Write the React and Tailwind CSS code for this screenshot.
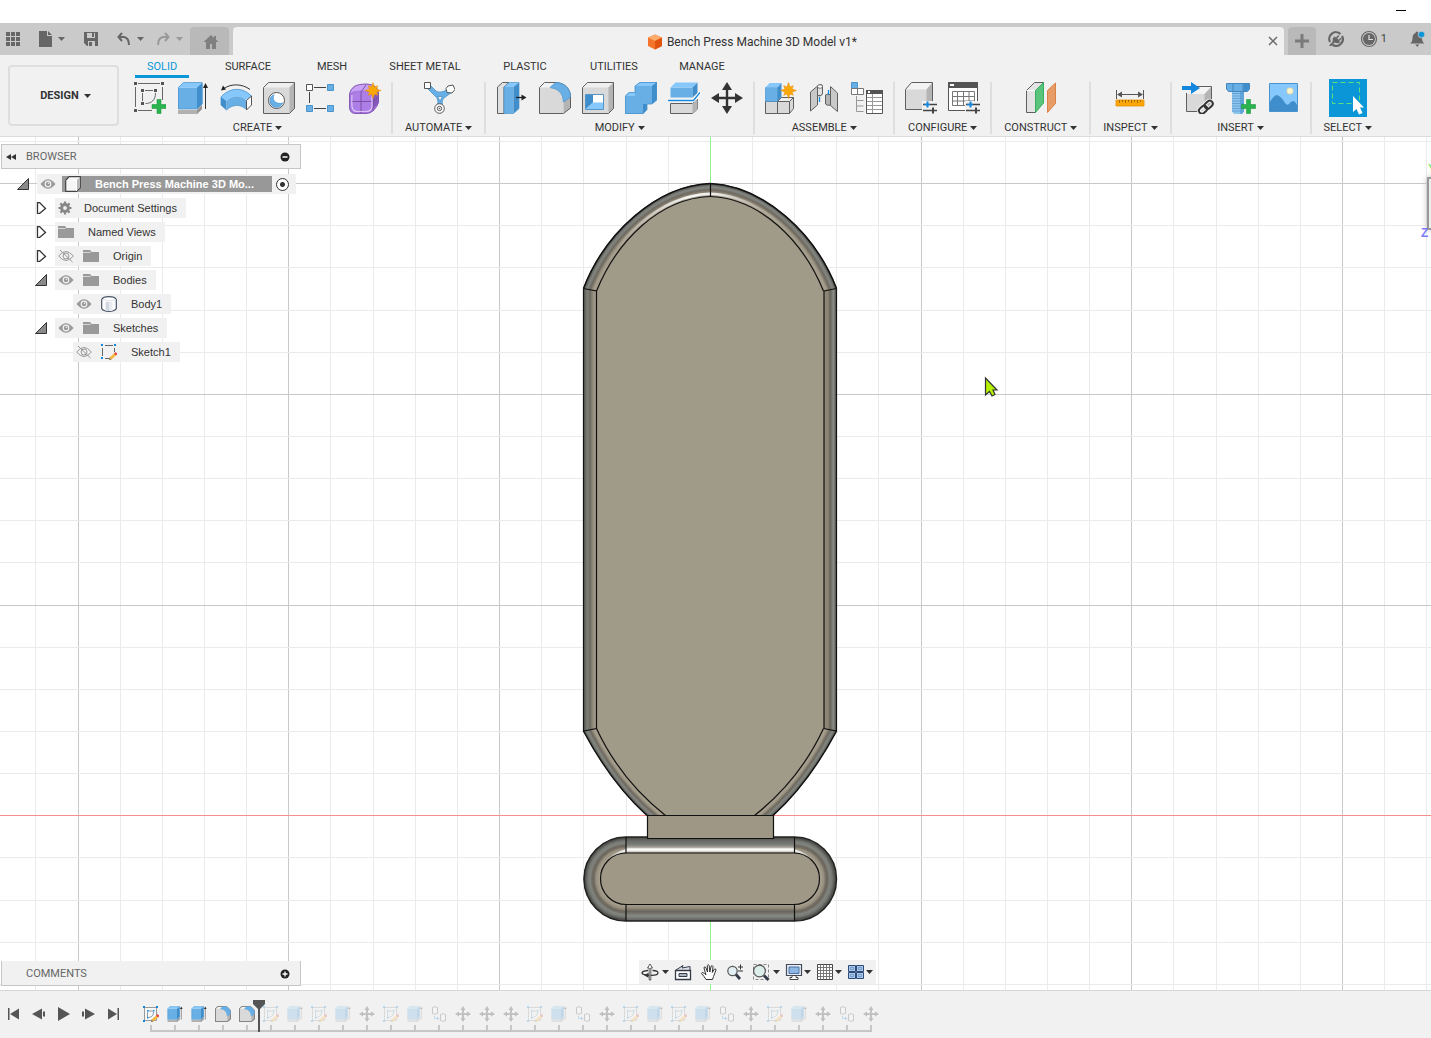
import React from "react";

const BLUE = "#68afe6";
const LIGHT = "#86c8fb";
const DEEP = "#3f8ecb";
const LINE = "#5f5f5f";

function Icon({ size = 32, box, className = "", children }) {
  return (
    <svg
      width={size}
      height={size}
      viewBox={box || `0 0 ${size} ${size}`}
      fill="none"
      aria-hidden="true"
      className={`block shrink-0 ${className}`}
    >
      {children}
    </svg>
  );
}

const Caret = ({ className = "text-[#333]" }) => (
  <svg width="7" height="4" viewBox="0 0 7 4" aria-hidden="true" className={`shrink-0 ${className}`}>
    <path d="M0 0h7L3.500 4z" fill="currentColor" />
  </svg>
);

const Star = ({ x, y, r = 8 }) => {
  const pts = [];
  for (let i = 0; i < 16; i++) {
    const a = (i * Math.PI) / 8 - Math.PI / 2;
    const q = i % 2 ? r * 0.48 : i % 4 ? r * 0.85 : r;
    pts.push(`${(x + q * Math.cos(a)).toFixed(2)},${(y + q * Math.sin(a)).toFixed(2)}`);
  }
  return <polygon points={pts.join(" ")} fill="#fca708" stroke="#e58c00" strokeWidth=".5" />;
};

const Plus = ({ x, y }) => (
  <path
    d={`M${x + 5} ${y}h4v5h5v4h-5v5h-4v-5h-5v-4h5z`}
    fill="#2bb34f"
    stroke="#1d9a40"
    strokeWidth=".6"
  />
);

/* ---------- ribbon icons ---------- */

const SketchIcon = () => (
  <Icon>
    <g fill="#555">
      <path d="M0 0h3v3H0zM27 0h3v3h-3zM0 27h3v3H0zM7 7h3v3H7zM20 7h3v3h-3zM7 20h3v3H7z" />
    </g>
    <g stroke="#666">
      <path d="M4 1.500h22M1.500 5v20M28.500 5v13M4 28.500h14M11 8.500h8M8.500 11v8" />
      <path d="M21.500 11c0 7-4 10.500-10 10.500" />
    </g>
    <Plus x={18} y={17.500} />
  </Icon>
);

const ExtrudeShape = () => (
  <>
    <path d="M1 28h19l5-5v4l-5 5H1z" fill="#b3b0b0" />
    <path d="M20 28l5-5v4l-5 5z" fill="#989494" />
    <path d="M1 5.500h19V27H1z" fill={BLUE} />
    <path d="M1 5.500L6 .5h19.500l-5.500 5z" fill={LIGHT} />
    <path d="M20 5.500l5.500-5V22L20 27z" fill={DEEP} />
    <path d="M1.500 27V5.500l5-5H25V22l-5 5z" stroke="#4b93cb" strokeWidth=".7" />
    <path d="M28.500 27V4" stroke="#333" />
    <path d="M28.500 1l2.500 5h-5z" fill="#222" />
  </>
);
const ExtrudeIcon = () => (
  <Icon>
    <ExtrudeShape />
  </Icon>
);

const RevolveIcon = () => (
  <Icon>
    <path d="M4 6.500C11 1.500 22 1.500 30 7.500" stroke="#333" />
    <path d="M1 8.500l2-5 3 4z" fill="#222" />
    <path d="M1 15C10 5 23 5 32 14l-6 4C20 13 13 13 6.500 19z" fill={LIGHT} />
    <path d="M1 15l5.500 4v9L1 23z" fill={DEEP} />
    <path d="M6.500 19C13 13 20 13 26 18v9c-6-5-13-5-19.500 1z" fill={BLUE} />
    <path d="M1 15C10 5 23 5 31 14M1 15v8l5.500 5c6.500-6 13.500-6 19.500-1" stroke="#4a93cc" strokeWidth=".8" />
    <path d="M26.500 18.500l5-4.500v9l-5 5z" fill="#fff" stroke="#555" />
  </Icon>
);

const GrayBox = () => (
  <>
    <path d="M.5 5.500l5-5h26v26l-5 5H.5z" fill="#d9d9d9" />
    <path d="M.5 5.500l5-5h26l-5 5z" fill="#efefef" />
    <path d="M26.500 5.500l5-5v26l-5 5z" fill="#b4b4b4" />
    <path d="M.5 5.500l5-5h26v26l-5 5H.5z" stroke={LINE} />
  </>
);

const HoleIcon = () => (
  <Icon>
    <GrayBox />
    <circle cx="13.500" cy="18.500" r="8" fill="#fff" stroke="#555" />
    <path d="M9.500 13.500a6.500 6.500 0 1 0 10 7.500C14.500 23 9 19 9.500 13.500z" fill={BLUE} stroke="#3b8ac8" strokeWidth=".8" />
    <path d="M11.500 12Q9 19 14 21.500 17.500 22.500 20 20.500 17 27 11.500 24.500 6 21 7.500 16 8.500 13 11.500 12z" fill={BLUE} />
  </Icon>
);

const PatternIcon = () => (
  <Icon>
    <path d="M8 5.500h12M8 26.500h12M3.500 10v11" stroke="#444" />
    <path d="M.5 2.500h6v6h-6z" fill="#fff" stroke="#555" />
    <path d="M21.500 2.500h6v6h-6zM.5 23.500h6v6h-6zM21.500 23.500h6v6h-6z" fill={BLUE} stroke="#4b93cb" />
  </Icon>
);

const FormIcon = () => (
  <Icon>
    <path d="M.5 12Q1 8 5 4.500Q9 2 18 2Q29 3 29.500 11V20Q29 24 24 29Q21 31.500 17 31.500H6Q.5 31 .5 25z" fill="#a877e0" />
    <path d="M1 12Q3 5 9 3Q20 1 26 4L22 9Q12 8 6 9Q2 10 1 12z" fill="#c9a1f5" />
    <path d="M24 14l5.500-4v11l-5.500 6z" fill="#8657bd" />
    <path d="M4 13Q5 10 9 10H19Q23 10 23 15V25Q22 29.500 17 29.500H8Q3 29 3 25z" fill="#ad7fe6" />
    <path d="M1.500 19.500h22l6-4M12 10v21M12 10l5-7M24 13q1.500 8-.5 15" stroke="#77499f" strokeWidth=".9" />
    <path d="M3 13q-.5 6 0 12 1 4.500 5 4.500h9q5 0 6-4.500V14" stroke="#dcc4f8" strokeWidth="1.200" />
    <path d="M.5 12Q1 8 5 4.500Q9 2 18 2Q29 3 29.500 11V20Q29 24 24 29Q21 31.500 17 31.500H6Q.5 31 .5 25z" stroke="#7d51ad" strokeWidth=".9" />
    <Star x={24} y={8.500} />
  </Icon>
);

const AutomateIcon = () => (
  <Icon>
    <path d="M5 7l9 9q2 3 0 9h6q-2-6 1-9l8-6-3-3q-10 5-13 2L8 4z" fill={BLUE} stroke="#4a93cc" strokeWidth=".8" />
    <path d="M14.500 14.500h5L17 19z" fill="#f1f1f1" stroke="#4a93cc" strokeWidth=".8" />
    <path d="M1.500.5h6v6h-6z" fill="#fff" stroke="#555" />
    <path d="M25 4l5-1 2 4.500-3 3.500-5-.5-1-4z" fill="#fff" stroke="#555" />
    <circle cx="16.500" cy="26.500" r="4.800" fill="#fff" stroke="#555" />
    <circle cx="16.500" cy="26.500" r="2.200" stroke="#555" />
    <circle cx="16.500" cy="26.500" r=".8" fill="#555" />
  </Icon>
);

const PressPullIcon = () => (
  <Icon>
    <path d="M1.500 5l5-4.500H13L8 5v26.500H1.500z" fill="#e0e0e0" stroke={LINE} />
    <path d="M8 5h9.500v26.500H8z" fill={BLUE} />
    <path d="M8 5l5-4.500h10L17.500 5z" fill={LIGHT} />
    <path d="M17.500 5L23 .5v26l-5.500 5z" fill={DEEP} />
    <path d="M8 31.500V5l5-4.500h10v26l-5.500 5z" stroke="#4a93cc" strokeWidth=".7" />
    <path d="M20 15.500h7" stroke="#222" strokeWidth="1.300" />
    <path d="M25.500 12.500l5 3-5 3z" fill="#222" />
  </Icon>
);

const FilletShape = () => (
  <>
    <path d="M.5 5.500l5-5H17C26 1 31.500 7 31.500 15v11l-7 5.500H.5z" fill="#f2f2f2" />
    <path d="M.5 5.500H11q13 2 13.500 14v12H.5z" fill="#d9d9d9" />
    <path d="M24.500 19.500l7-5V26l-7 5.500z" fill="#b4b4b4" />
    <path d="M.5 5.500l5-5H17C26 1 31.500 7 31.500 15v11l-7 5.500H.5z" stroke={LINE} />
    <path d="M11 5.500l5.500-5C26 .5 31.500 7 31.500 15l-7 5Q24 7 11 5.500z" fill={BLUE} stroke="#4a93cc" strokeWidth=".8" />
  </>
);
const FilletIcon = () => (
  <Icon>
    <FilletShape />
  </Icon>
);

const ShellIcon = () => (
  <Icon>
    <GrayBox />
    <path d="M3.500 12.500h18v15h-18z" fill="#fff" stroke="#5595c7" />
    <path d="M4 13h7v7.500L4 27z" fill={DEEP} />
    <path d="M11 20.500h10V27H4z" fill={LIGHT} />
  </Icon>
);

const CombineIcon = () => (
  <Icon>
    <path d="M0 14l4-4h6V4l5-4h17v18l-5 4h-5v5.500L18 32H0z" fill={BLUE} />
    <path d="M10 4l5-4h17l-5 4zM0 14l4-4h6v4z" fill={LIGHT} />
    <path d="M27 4l5-4v18l-5 4zM18 22h4v5.500L18 32z" fill={DEEP} />
    <path d="M.5 14l4-3.500H10V4L15 .5h16.500V18L27 22h-5v5.500l-4 4H.5z" stroke="#4a93cc" strokeWidth=".8" />
  </Icon>
);

const SplitIcon = () => (
  <Icon>
    <path d="M2.500 21.500h22l5-4v9.500l-5 4.500h-22z" fill="#d9d9d9" stroke={LINE} />
    <path d="M24.500 21.500l5-4v9.500l-5 4.500z" fill="#b4b4b4" />
    <path d="M2.500 5.500h22v10h-22z" fill={BLUE} />
    <path d="M2.500 5.500l5-5h22l-5 5z" fill={LIGHT} />
    <path d="M24.500 5.500l5-5V11l-5 4.500z" fill={DEEP} />
    <path d="M0 18.500h25.500l6.500-8" stroke="#fff" strokeWidth="3" />
    <path d="M0 18.500h25.500l6.500-8" stroke="#1487dc" strokeWidth="1.300" />
  </Icon>
);

const MoveShape = () => (
  <path
    d="M16 0l5 8h-3.800v6.800H24V11l8 5-8 5v-3.800h-6.800V24H21l-5 8-5-8h3.800v-6.800H8V21l-8-5 8-5v3.800h6.800V8H11z"
    fill="#333"
  />
);
const MoveIcon = () => (
  <Icon>
    <MoveShape />
  </Icon>
);

const ComponentIcon = () => (
  <Icon>
    <path d="M.5 19.500h12v12H.5zM12.500 19.500l4-4h12v11l-4 5h-12z" fill="#d9d9d9" stroke={LINE} />
    <path d="M12.500 19.500h12l4-4h-12z" fill="#efefef" stroke={LINE} />
    <path d="M24.500 19.500v12" stroke={LINE} />
    <path d="M.5 5.500h12v14H.5z" fill={BLUE} stroke="#4a93cc" strokeWidth=".7" />
    <path d="M.5 5.500l4-4.500h12l-4 4.500z" fill={LIGHT} />
    <path d="M12.500 5.500l4-4.500v13.500l-4 5z" fill={DEEP} />
    <Star x={23.500} y={8.500} />
  </Icon>
);

const JointIcon = () => (
  <Icon>
    <path d="M2.500 10l7-6q4-3 5 0v8q-2 3-5 1.500V23l-7 6z" fill="#c9c9c9" stroke={LINE} />
    <path d="M9.500 5v8.500q3 1 5-1.500V5" fill="#e3e3e3" stroke={LINE} />
    <ellipse cx="12" cy="4.500" rx="2.500" ry="1.800" fill="#fff" stroke={LINE} strokeWidth=".8" />
    <path d="M22.500 4.500l7 6.500v18.500l-7-6z" fill="#c9c9c9" stroke={LINE} />
    <path d="M17.500 13q2-2 5 0v10q-4 1-5-1z" fill="#b4b4b4" stroke={LINE} />
    <path d="M11.500 15v5M20.500 8v5" stroke="#1487dc" strokeWidth="1.300" />
  </Icon>
);

const AsBuiltTableIcon = () => (
  <Icon>
    <path d="M.5.500h6v6h-6z" fill={BLUE} stroke="#4a93cc" />
    <path d="M.5 6.500h6v6h-6zM6.500 6.500h6v6h-6z" fill="#fff" stroke="#777" />
    <path d="M5.500 14v15.500h7M5.500 18.500h7M5.500 24h7" stroke="#999" />
    <path d="M15.500 8.500h16v23h-16z" fill="#fff" stroke="#555" />
    <path d="M15 8h17v4H15z" fill="#555" />
    <path d="M16 15.500h15M16 19.500h15M16 23.500h15M16 27.500h15M21.500 12v19" stroke="#999" />
    <path d="M17 9h2v2h-2z" fill="#fff" />
  </Icon>
);

const Sliders = () => (
  <>
    <path d="M17 19h15v13H17z" fill="#f1f1f1" />
    <path d="M18 22.500h14M18 28.500h14" stroke="#444" strokeWidth="1.500" />
    <path d="M22.500 19.500v6" stroke="#1487dc" strokeWidth="2" />
    <path d="M28 25.500v6" stroke="#444" strokeWidth="2" />
    <path d="M19 22.500h6" stroke="#1487dc" strokeWidth="1.500" />
  </>
);

const ConfigureIcon = () => (
  <Icon>
    <path d="M.5 7.500l6-7h21v20l-6 7H.5z" fill="#d9d9d9" />
    <path d="M.5 7.500l6-7h21l-6 7z" fill="#f3f3f3" />
    <path d="M21.500 7.500l6-7v20l-6 7z" fill="#b4b4b4" />
    <path d="M.5 7.500l6-7h21v20l-6 7H.5z" stroke={LINE} />
    <Sliders />
  </Icon>
);

const ConfigTableIcon = () => (
  <Icon>
    <path d="M.5.500h29v28H.5z" fill="#fff" stroke="#555" />
    <path d="M0 0h30v6H0z" fill="#555" />
    <path d="M2 2h4v2H2z" fill="#fff" />
    <path d="M4.500 9.500h22v14h-22zM4.500 14.500h22M4.500 19h22M9.500 9.500v14M15.500 9.500v14M21 9.500v14" stroke="#777" />
    <Sliders />
  </Icon>
);

const ConstructIcon = () => (
  <Icon>
    <path d="M1.500 8.500l8-8h9l-8 8v22h-9z" fill="#e3e3e3" stroke={LINE} />
    <path d="M1.500 8.500h9" stroke="#fff" />
    <path d="M10.500 8.500l8-8V21l-8 9.500z" fill="#5bc47c" stroke="#3aae60" />
    <path d="M22.500 8.500l8-7.500v20.500l-8 9z" fill="#e89c68" stroke="#d98248" />
  </Icon>
);

const MeasureIcon = () => (
  <Icon>
    <path d="M2.500 8v9M29.500 8v9M4 12.500h24" stroke="#555" />
    <path d="M3 12.500l5-3v6zM29 12.500l-5-3v6z" fill="#555" />
    <path d="M2 18h28v6H2z" fill="#fca708" stroke="#e59300" strokeWidth=".8" />
    <path d="M5.500 18v3M8.500 18v2M11.500 18v3M14.500 18v2M17.500 18v3M20.500 18v2M23.500 18v3M26.500 18v2" stroke="#8a5a00" strokeWidth=".8" />
  </Icon>
);

const InsertIcon = () => (
  <Icon>
    <path d="M4.500 12l7-7.500h18V22l-7 7.500h-18z" fill="#d9d9d9" />
    <path d="M4.500 12l7-7.500h18L22.500 12z" fill="#f3f3f3" />
    <path d="M22.500 12l7-7.500V22l-7 7.500z" fill="#b4b4b4" />
    <path d="M4.500 11v18.500h14M15 4.500h14.500V18" stroke={LINE} />
    <path d="M0 4h9V0l9 6-9 6V8H0z" fill="#1487dc" />
    <g transform="rotate(-42 24 25)">
      <rect x="15.500" y="22" width="9" height="6" rx="3" stroke="#f1f1f1" strokeWidth="4" />
      <rect x="23" y="22" width="9" height="6" rx="3" stroke="#f1f1f1" strokeWidth="4" />
      <rect x="15.500" y="22" width="9" height="6" rx="3" stroke="#333" strokeWidth="2" />
      <rect x="23" y="22" width="9" height="6" rx="3" stroke="#333" strokeWidth="2" />
    </g>
  </Icon>
);

const FastenerIcon = () => (
  <Icon>
    <path d="M7 9h12v20.500L17 32H9l-2-2.500z" fill="#8cc4ee" />
    <path d="M15 9h4v20.500L17 32h-2z" fill="#66a9dc" />
    <path d="M7 11.500h12M7 14h12M7 16.500h12M7 19h12M7 21.500h12M7 24h12M7 26.500h12M7 29h12" stroke="#5295cb" strokeWidth=".7" />
    <path d="M1.500 1.500h23V7l-2 2.500h-19L1.500 7z" fill={BLUE} stroke="#4387bd" />
    <path d="M8 2v7M18 2v7" stroke="#4387bd" />
    <path d="M18.500 2H24v5l-2 2h-3.500z" fill={DEEP} />
    <Plus x={16.500} y={17.500} />
  </Icon>
);

const CanvasImageIcon = () => (
  <Icon>
    <path d="M1.500 1.500h28v28h-28z" fill={LIGHT} stroke="#4a93cc" />
    <circle cx="22" cy="9" r="3.200" fill="#fff6cf" stroke="#d8d39f" strokeWidth=".7" />
    <path d="M2 20q4-7 7-7 4 1 8 8 2 3 4 1 2-3 4-3 2 0 4 4v6H2z" fill={DEEP} />
  </Icon>
);

const SelectIcon = () => (
  <Icon size={38}>
    <path d="M0 0h38v38H0z" fill="#0b96d8" />
    <path d="M3.500 3.500h27v21h-27z" stroke="#5fe07d" strokeDasharray="5 3" />
    <path d="M24 17v16l3.500-3 2.500 5.500 3.500-1.500-2.500-5.500h4z" fill="#fff" />
  </Icon>
);

/* ---------- ribbon data ---------- */

const TABS = [
  ["SOLID", "w-[54px]"],
  ["SURFACE", "w-[74px]"],
  ["MESH", "w-[50px]"],
  ["SHEET METAL", "w-[92px]"],
  ["PLASTIC", "w-[64px]"],
  ["UTILITIES", "w-[70px]"],
  ["MANAGE", "w-[62px]"],
];

const GROUPS = [
  {
    name: "CREATE",
    tools: [
      ["Create Sketch", SketchIcon],
      ["Extrude", ExtrudeIcon],
      ["Revolve", RevolveIcon],
      ["Hole", HoleIcon],
      ["Rectangular Pattern", PatternIcon],
      ["Create Form", FormIcon],
    ],
  },
  { name: "AUTOMATE", tools: [["Automated Modeling", AutomateIcon]] },
  {
    name: "MODIFY",
    tools: [
      ["Press Pull", PressPullIcon],
      ["Fillet", FilletIcon],
      ["Shell", ShellIcon],
      ["Combine", CombineIcon],
      ["Split Body", SplitIcon],
      ["Move/Copy", MoveIcon],
    ],
  },
  {
    name: "ASSEMBLE",
    tools: [
      ["New Component", ComponentIcon],
      ["Joint", JointIcon],
      ["Bill of Materials", AsBuiltTableIcon],
    ],
  },
  {
    name: "CONFIGURE",
    tools: [
      ["Configure", ConfigureIcon],
      ["Configuration Table", ConfigTableIcon],
    ],
  },
  { name: "CONSTRUCT", tools: [["Offset Plane", ConstructIcon]] },
  { name: "INSPECT", tools: [["Measure", MeasureIcon]] },
  {
    name: "INSERT",
    tools: [
      ["Insert Derive", InsertIcon],
      ["Insert Fastener", FastenerIcon],
      ["Canvas", CanvasImageIcon],
    ],
  },
  { name: "SELECT", tools: [["Select", SelectIcon]] },
];

/* ---------- top bar ---------- */

function TopBar() {
  return (
    <header className="flex h-8 shrink-0 items-end overflow-hidden bg-[#cacaca] text-[#666]">
      <div className="flex h-8 w-[190px] shrink-0 items-center pl-1.5">
        <button aria-label="Data panel">
          <Icon size={14}>
            <path d="M0 0h4v4H0zM5 0h4v4H5zM10 0h4v4h-4zM0 5h4v4H0zM5 5h4v4H5zM10 5h4v4h-4zM0 10h4v4H0zM5 10h4v4H5zM10 10h4v4h-4z" fill="currentColor" />
          </Icon>
        </button>
        <button aria-label="File" className="ml-[18px] flex items-center gap-1">
          <Icon size={16}>
            <path d="M1 0h8v5h5v11H1zM10 0l4 4h-4z" fill="currentColor" />
          </Icon>
          <Caret className="text-[#666]" />
        </button>
        <button aria-label="Save" className="ml-[18px]">
          <Icon size={16}>
            <path d="M1 1h14v14H4l-3-3z" fill="currentColor" />
            <path d="M4 2h8v5H4zM5 10h7v5H5z" fill="#cacaca" />
            <path d="M9 2h2v4H9zM6 11h3v4H6z" fill="currentColor" />
          </Icon>
        </button>
        <button aria-label="Undo" className="ml-[18px] flex items-center gap-1.5">
          <Icon size={14}>
            <path d="M5 1L1.500 5 5 9M2 5h5q5 1 5 8" stroke="currentColor" strokeWidth="2" />
          </Icon>
          <Caret className="text-[#666]" />
        </button>
        <button aria-label="Redo" className="ml-3 flex items-center gap-1.5 text-[#999]">
          <Icon size={14}>
            <path d="M9 1l3.500 4L9 9M12 5H7q-5 1-5 8" stroke="currentColor" strokeWidth="2" />
          </Icon>
          <Caret className="text-[#999]" />
        </button>
      </div>
      <button aria-label="Home" className="flex h-7 w-[39px] shrink-0 items-center justify-center rounded-t bg-[#b9b9b9] pl-0.5 pt-0.5 text-[#808080]">
        <Icon size={16}>
          <path d="M8 1L.5 8H3v7h4v-5h2v5h4V8h2.500L13 5.500V2h-2v2z" fill="currentColor" />
        </Icon>
      </button>
      <div className="ml-1 flex h-7 min-w-0 flex-1 items-center rounded-t bg-[#f1f1f1]">
        <div className="flex flex-1 items-center justify-center gap-1 pl-2 pt-px text-[12px] leading-4 text-[#333]">
          <Icon size={16}>
            <path d="M8 .5l7 3v8.500l-7 3.500L1 12V3.500z" fill="#f4742b" />
            <path d="M8 .5l7 3L8 7 1 3.500z" fill="#ffab6b" />
            <path d="M8 7l7-3.500V12l-7 3.500z" fill="#e05410" />
          </Icon>
          Bench Press Machine 3D Model v1*
        </div>
        <button aria-label="Close document" className="mr-px flex h-5 w-5 items-center justify-center text-[#6b6b6b]">
          <Icon size={10}>
            <path d="M1 1l8 8M9 1L1 9" stroke="currentColor" strokeWidth="1.500" />
          </Icon>
        </button>
      </div>
      <button aria-label="New design" className="ml-1 flex h-7 w-7 shrink-0 items-center justify-center rounded-t bg-[#b9b9b9] text-[#7b7b7b]">
        <Icon size={14}>
          <path d="M5.500 0h3v5.500H14v3H8.500V14h-3V8.500H0v-3h5.500z" fill="currentColor" />
        </Icon>
      </button>
      <div className="flex h-8 shrink-0 items-center pl-3">
        <button aria-label="Extensions">
          <Icon size={16}>
            <path d="M12.500 3A6.700 6.700 0 0 0 2 11" stroke="currentColor" strokeWidth="2.200" />
            <path d="M4.500 13.800A6.700 6.700 0 0 0 14 5" stroke="currentColor" strokeWidth="2.200" />
            <path d="M1 14.500l3.800-4Q4 7 6.500 5.500l1.500 1 2.300-2.500 1 1-2 2.500L10.500 8.700l2.300-2 1 1-2.600 2.300 1 1.300Q9.500 13 6.500 11.500L3 15.200z" fill="currentColor" />
          </Icon>
        </button>
        <button className="ml-4 flex items-center gap-[3px] text-[11px] leading-4">
          <Icon size={18}>
            <circle cx="9" cy="9" r="7.500" stroke="currentColor" strokeWidth="1.200" />
            <circle cx="9" cy="9" r="6" fill="currentColor" />
            <path d="M9 5v4.500h4" stroke="#e0e0e0" strokeWidth="1.200" />
          </Icon>
          <span className="text-[#444]">1</span>
        </button>
        <button aria-label="Notifications" className="ml-[22px] mr-1">
          <Icon size={18}>
            <path d="M8 1.500q1.500 0 1.500 1.500Q13 4 13 8q0 4 2.500 5.500H1Q3.500 12 3.500 8q0-4 3-5Q6.500 1.500 8 1.500zM6.300 14.500h4L8.300 17z" fill="currentColor" />
            <circle cx="12.500" cy="4.500" r="3.300" fill="#0b96d8" stroke="#cacaca" strokeWidth=".8" />
          </Icon>
        </button>
      </div>
    </header>
  );
}

/* ---------- ribbon ---------- */

function Ribbon() {
  return (
    <section className="flex h-[82px] shrink-0 overflow-hidden border-b border-[#dcdcdc] bg-[#f1f1f1] text-[11px] leading-4 text-[#333]">
      <button className="ml-2 mt-2.5 flex h-[61px] w-[111px] shrink-0 items-center justify-center gap-[5px] rounded border-2 border-[#dedede] pl-1 pt-px font-bold">
        DESIGN <Caret />
      </button>
      <div className="ml-[5px]">
        <nav className="flex gap-[22px] pl-[11px] pt-[3px]">
          {TABS.map(([t, w], i) => (
            <button
              key={t}
              className={`h-5 whitespace-nowrap border-b-[3px] text-center leading-4 ${w} ${i === 0 ? "border-[#0b96d8] text-[#0b96d8]" : "border-transparent"}`}
            >
              {t}
            </button>
          ))}
        </nav>
        <div className="flex pt-px">
          {GROUPS.map(({ name, tools }, i) => (
            <React.Fragment key={name}>
              {i > 0 && <div className="mt-[3px] h-[52px] w-0.5 shrink-0 bg-[#dedede]" />}
              <div className={`flex flex-col items-center ${tools.length > 1 ? "px-2.5" : "px-3"}`}>
                <div className="flex h-[38px] items-center gap-[11px]">
                  {tools.map(([label, Glyph]) => (
                    <button key={label} aria-label={label}>
                      <Glyph />
                    </button>
                  ))}
                </div>
                <button className="mt-[3px] flex items-center gap-[3px] whitespace-nowrap">
                  {name}
                  <Caret />
                </button>
              </div>
            </React.Fragment>
          ))}
        </div>
      </div>
    </section>
  );
}

/* ---------- viewport drawing ---------- */

const lerp = (a, b, t) => a.map((v, i) => v + (b[i] - v) * t);
const cubic = (p) =>
  `M${p[0]} ${p[1]}C${p[2]} ${p[3]} ${p[4]} ${p[5]} ${p[6]} ${p[7]}`;
const mirror = (p) => p.map((v, i) => (i % 2 ? v : 1420 - v));

const TOP_OUT = [583.5, 288.5, 605, 233, 656, 186, 710, 183.5];
const TOP_IN = [596.5, 291, 617, 241, 659, 198.5, 710, 196.5];
const LOW_OUT = [583.5, 731, 600, 762, 621, 792, 647, 815.5];
const LOW_IN = [596.5, 728.5, 613, 764, 637, 793, 665.5, 815.5];

const RAMP = [
  "#4f4f4b", "#5b5c58", "#696b66", "#787b76", "#828580", "#7d7f79", "#75726a",
  "#6e695f", "#7a7468", "#8b8475", "#9a9383", "#a39c8b", "#a69f8e", "#a29b8a",
];

function Bands({ from, to, width = 1.8 }) {
  return RAMP.map((c, i) => (
    <path key={i} d={cubic(lerp(from, to, (i + 0.3) / RAMP.length))} stroke={c} strokeWidth={width} fill="none" />
  ));
}

function Model() {
  const n = 18;
  return (
    <g>
      <defs>
        <linearGradient id="sideL">
          <stop offset="0" stopColor="#55554f" />
          <stop offset=".3" stopColor="#7d7f79" />
          <stop offset=".5" stopColor="#6d6a61" />
          <stop offset=".8" stopColor="#9d9686" />
          <stop offset="1" stopColor="#a39c8b" />
        </linearGradient>
        <linearGradient id="sideR">
          <stop offset="0" stopColor="#8d8677" />
          <stop offset=".3" stopColor="#8d8677" />
          <stop offset=".5" stopColor="#66635b" />
          <stop offset=".75" stopColor="#8a8c87" />
          <stop offset="1" stopColor="#50504c" />
        </linearGradient>
        <linearGradient id="shine" gradientUnits="userSpaceOnUse" x1="615" y1="0" x2="790" y2="0">
          <stop offset="0" stopColor="#fff" stopOpacity="0" />
          <stop offset=".42" stopColor="#fff" stopOpacity=".9" />
          <stop offset=".58" stopColor="#fff" stopOpacity=".8" />
          <stop offset=".8" stopColor="#fff" stopOpacity=".2" />
          <stop offset="1" stopColor="#fff" stopOpacity="0" />
        </linearGradient>
        <linearGradient id="pillTop" x2="0" y2="1">
          <stop offset="0" stopColor="#4b4944" />
          <stop offset=".25" stopColor="#6a6b67" />
          <stop offset=".5" stopColor="#7d807b" />
          <stop offset=".65" stopColor="#a9a69d" />
          <stop offset=".75" stopColor="#ffffff" />
          <stop offset=".84" stopColor="#f4f3f0" />
          <stop offset="1" stopColor="#a39c8b" />
        </linearGradient>
        <linearGradient id="pillLow" x2="0" y2="1">
          <stop offset="0" stopColor="#a39c8b" />
          <stop offset=".2" stopColor="#958d7d" />
          <stop offset=".42" stopColor="#69655c" />
          <stop offset=".7" stopColor="#888b86" />
          <stop offset="1" stopColor="#5c5c58" />
        </linearGradient>
        <linearGradient id="pillFade" gradientUnits="userSpaceOnUse" x1="603" y1="0" x2="817" y2="0">
          <stop offset="0" stopColor="#fff" stopOpacity="0" />
          <stop offset=".11" stopColor="#fff" stopOpacity=".9" />
          <stop offset=".89" stopColor="#fff" stopOpacity=".9" />
          <stop offset="1" stopColor="#fff" stopOpacity="0" />
        </linearGradient>
        <clipPath id="pillUpper">
          <path d="M583 836h254v30H583z" />
        </clipPath>
        <clipPath id="lowerEdge">
          <path d="M583 700h254v115.500H583z" />
        </clipPath>
      </defs>

      {/* plate */}
      <path
        d="M583.500 288.500C605 233 656 186 710 183.500C764 186 815 233 836.500 288.500V731C820 762 799 792 773 815.500H647C621 792 600 762 583.500 731z"
        fill="#a09a88"
      />
      <Bands from={TOP_OUT} to={TOP_IN} />
      <Bands from={mirror(TOP_OUT)} to={mirror(TOP_IN)} />
      <g clipPath="url(#lowerEdge)">
        <Bands from={LOW_OUT} to={LOW_IN} />
        <Bands from={mirror(LOW_OUT)} to={mirror(LOW_IN)} />
      </g>
      <path d={cubic(lerp(TOP_OUT, TOP_IN, 0.78))} stroke="url(#shine)" strokeWidth="2.500" fill="none" />
      <path d={cubic(mirror(lerp(TOP_OUT, TOP_IN, 0.78)))} stroke="url(#shine)" strokeWidth="2.500" fill="none" />
      <path d="M583.500 288.500l13 2.500v437.500l-13 2.500z" fill="url(#sideL)" />
      <path d="M836.500 288.500l-12.500 2.500v437.500l12.500 2.500z" fill="url(#sideR)" />
      <g stroke="#111" strokeWidth="1.200" fill="none">
        <path d={cubic(TOP_OUT)} strokeWidth="1.500" />
        <path d={cubic(mirror(TOP_OUT))} strokeWidth="1.500" />
        <path d={cubic(TOP_IN)} />
        <path d={cubic(mirror(TOP_IN))} />
        <path d={cubic(LOW_OUT)} strokeWidth="1.300" />
        <path d={cubic(mirror(LOW_OUT))} strokeWidth="1.300" />
        <path d={cubic(LOW_IN)} />
        <path d={cubic(mirror(LOW_IN))} />
        <path d="M583.500 288.500V731l13-2.500V291l-13-2.500M836.500 288.500V731l-12.500-2.500V291l12.500-2.500M710.500 183v14" />
      </g>

      {/* base */}
      {Array.from({ length: n }, (_, i) => {
        const t = i / n;
        return (
          <rect
            key={i}
            x={583.5 + 17 * t}
            y={837 + 16 * t}
            width={253 - 34 * t}
            height={84 - 32.500 * t}
            rx={42 - 16 * t}
            fill={RAMP[Math.floor((i * RAMP.length) / n)]}
          />
        );
      })}
      <rect x="602.500" y="850" width="215" height="60" rx="29" fill="none" stroke="url(#pillFade)" strokeWidth="2.500" clipPath="url(#pillUpper)" />
      <path d="M626 837h168.500v16H626z" fill="url(#pillTop)" />
      <path d="M626 904.500h168.500V921H626z" fill="url(#pillLow)" />
      <rect x="600.500" y="853" width="219" height="51.500" rx="25.700" fill="#9f9887" stroke="#111" strokeWidth="1.200" />
      <rect x="584" y="837" width="252.500" height="84" rx="42" fill="none" stroke="#222" strokeWidth="1.500" />
      <path d="M626 837v16M794.500 837v16M626 904.500V921M794.500 904.500V921" stroke="#111" strokeWidth="1.200" />

      {/* neck */}
      <path d="M647.500 815.500h126v23h-126z" fill="#9e9786" stroke="#111" strokeWidth="1.200" />
    </g>
  );
}

function Scene() {
  const cols = Array.from({ length: 45 }, (_, i) => i - 20);
  const rows = Array.from({ length: 31 }, (_, i) => i - 20);
  return (
    <svg
      viewBox="0 137 1431 853"
      preserveAspectRatio="xMidYMid slice"
      className="absolute inset-0 h-full w-full"
      role="img"
      aria-label="Bench press seat model, front view"
    >
      <g shapeRendering="crispEdges">
        {cols.map((i) => (
          <path key={`c${i}`} d={`M${Math.round(709.8 + i * 42.15)}.5 -200V1300`} stroke={i % 5 ? "#ebebeb" : "#c8c8c8"} />
        ))}
        {rows.map((i) => (
          <path key={`r${i}`} d={`M-300 ${Math.round(815.3 + i * 42.15)}.5H1800`} stroke={i % 5 ? "#ebebeb" : "#c8c8c8"} />
        ))}
        <path d="M710.500 -200V1300" stroke="#8df58d" />
        <path d="M-300 815.500H1800" stroke="#f58f8f" />
      </g>
      <Model />
      <path d="M985.500 378v17l4-3.500 2.500 4.500 3-1.500-2-4.500h4z" fill="#b4f000" stroke="#333" strokeWidth="1.200" />
    </svg>
  );
}

/* ---------- browser tree ---------- */

const Eye = () => (
  <Icon size={16}>
    <path d="M.5 8Q8-1.500 15.500 8 8 17.500.500 8z" fill="#9a9a9a" />
    <circle cx="8" cy="8" r="3.400" fill="#f1f1f1" />
    <circle cx="8" cy="8" r="2.200" fill="#9a9a9a" />
    <circle cx="8.500" cy="7.300" r=".8" fill="#f1f1f1" />
  </Icon>
);
const EyeOff = () => (
  <Icon size={16}>
    <path d="M.7 8Q8-1 15.300 8 8 17 .700 8z" stroke="#999" />
    <circle cx="8" cy="8" r="3" stroke="#999" />
    <path d="M2 2l12.500 12" stroke="#999" />
  </Icon>
);
const Folder = () => (
  <Icon size={16}>
    <path d="M0 2h7l1.500 2H16v10H0z" fill="#999" />
    <path d="M0 4.500h7.500" stroke="#d5d5d5" />
  </Icon>
);
const Gear = () => (
  <Icon size={14}>
    <circle cx="7" cy="7" r="3.400" stroke="#888" strokeWidth="3" />
    <path d="M7 .5v2.500M7 11v2.500M.5 7H3M11 7h2.500M2.400 2.400l1.800 1.800M9.800 9.800l1.800 1.800M2.400 11.600l1.800-1.800M9.800 4.200l1.800-1.800" stroke="#888" strokeWidth="2.200" />
  </Icon>
);
const BodyIcon = () => (
  <Icon size={16}>
    <path d="M.7 3.500Q2 .7 8 .7t7.300 2.800v9Q14 15.300 8 15.300T.7 12.500z" fill="#fff" stroke="#4a5566" strokeWidth="1.200" />
    <path d="M4.500 6h4v9h-4z" fill="#d3d7e2" />
    <path d="M8.500 6h3v9h-3z" fill="#e9ebf1" />
    <path d="M1.500 3.500q6.500 3 13 0" stroke="#dfe2e9" />
  </Icon>
);
const CubeIcon = () => (
  <Icon size={16}>
    <path d="M.7 4.500L4 .7h11.300v11L11.500 15.300H.7z" fill="#f6f6f6" stroke="#444" strokeWidth="1.200" />
    <path d="M11.500 4.500l3.500-3.500v10.500l-3.500 3.500z" fill="#b7b7b7" />
    <path d="M1.500 4.500h10V15" stroke="#fff" />
  </Icon>
);
const Pencil = () => (
  <>
    <path d="M8.500 13.500l5-4.500 2 2-5 4.500-2.500.5z" fill="#f5b942" />
    <path d="M13 9.500l1.500-1.500 2 1.500-1.500 2z" fill="#e5484d" />
    <path d="M8 16l.5-2.500 2 2z" fill="#777" />
  </>
);
const TreeSketch = () => (
  <Icon size={16}>
    <path d="M4 1.500h8M1.500 4v8M13.500 4v4M4 14.500h4" stroke="#666" />
    <path d="M0 0h2v2H0zM13 0h2v2h-2zM0 13h2v2H0z" fill="#1487dc" />
    <Pencil />
  </Icon>
);
const Twisty = ({ open }) => (
  <Icon size={12}>
    {open ? (
      <>
        <path d="M11.500.5v11H.5z" fill="#8a8a8a" />
        <path d="M11.500.5v11H.5z" stroke="#333" />
      </>
    ) : (
      <path d="M2.500 .5v11.500l2-.5L10.500 6.500 4.500 .5z" fill="#fff" stroke="#333" strokeWidth="1.300" />
    )}
  </Icon>
);

const NODES = [
  { label: "Document Settings", open: false, icons: [Gear], gap: "ml-3" },
  { label: "Named Views", open: false, icons: [Folder], gap: "ml-3.5" },
  { label: "Origin", open: false, icons: [EyeOff, Folder], gap: "ml-3.5" },
  { label: "Bodies", open: true, icons: [Eye, Folder], gap: "ml-3.5" },
  { label: "Body1", icons: [Eye, BodyIcon], gap: "ml-3.5" },
  { label: "Sketches", open: true, icons: [Eye, Folder], gap: "ml-3.5" },
  { label: "Sketch1", icons: [EyeOff, TreeSketch], gap: "ml-3.5" },
];

function Browser() {
  return (
    <aside className="relative w-[301px] font-['Liberation_Sans',sans-serif] text-[11px] leading-4 text-[#333]">
      <div className="ml-px flex h-[25px] items-center border border-[#c6c6c6] bg-[#f1f1f1] font-[Roboto,sans-serif] text-[#666]">
        <button aria-label="Collapse browser" className="ml-1 w-5">
          <Icon size={10}>
            <path d="M5 2v6L0 5zM10 2v6L5 5z" fill="#333" />
          </Icon>
        </button>
        <h2 className="flex-1">BROWSER</h2>
        <button aria-label="Minimize" className="mr-2.5">
          <Icon size={10}>
            <circle cx="5" cy="5" r="4.500" fill="#222" />
            <path d="M2.500 5h5" stroke="#fff" strokeWidth="1.500" />
          </Icon>
        </button>
      </div>
      <ul className="flex flex-col gap-1 pt-[5px]">
        <li className="flex h-5 items-center pl-[17px]">
          <button aria-label="Collapse">
            <Twisty open />
          </button>
          <div className="ml-2 flex h-5 items-center bg-[#f1f1f1] pl-[3px] pr-[7px]">
            <Eye />
            <div className="ml-1.5 flex h-4 w-[210px] items-center gap-3.5 bg-[#989898] pl-[3px]">
              <CubeIcon />
              <span className="whitespace-nowrap font-bold text-white">Bench Press Machine 3D Mo...</span>
            </div>
            <input type="radio" name="active" defaultChecked aria-label="Activate component" className="ml-1 h-[13px] w-[13px] appearance-none rounded-full border border-[#333] bg-[radial-gradient(circle,#333_0_2px,#fff_3px)]" />
          </div>
        </li>
        {NODES.map(({ label, open, icons, gap }) => (
          <li key={label} className={`flex h-5 items-center ${open === undefined ? "pl-[73px]" : "pl-[35px]"}`}>
            {open !== undefined && (
              <button aria-label={open ? "Collapse" : "Expand"} className="mr-2">
                <Twisty open={open} />
              </button>
            )}
            <div className="flex h-5 items-center bg-[#f1f1f1] pl-[3px] pr-[9px]">
              <div className="flex items-center gap-[9px]">
                {icons.map((G, i) => (
                  <G key={i} />
                ))}
              </div>
              <span className={gap}>{label}</span>
            </div>
          </li>
        ))}
      </ul>
    </aside>
  );
}

/* ---------- navigation bar ---------- */

const OrbitIcon = () => (
  <Icon size={18}>
    <path d="M7 7.500Q1 8 1 10t8 2.300T17 10 11.500 7.500" stroke="#333" strokeWidth="1.300" />
    <path d="M9 1l2.500 4h-1.700v12H8.200V5H6.500z" fill="#fff" stroke="#333" strokeWidth=".8" />
    <path d="M3 12.300l4.500-2.500v5z" fill="#333" />
  </Icon>
);
const LookIcon = () => (
  <Icon size={18}>
    <path d="M2 7l7-4.500L8 5l8-1.500v4" fill="#e2e4ea" stroke="#333a48" />
    <path d="M1.500 7.500h15v9h-15z" fill="#fff" stroke="#333a48" strokeWidth="1.300" />
    <path d="M5 10.500h8v3H5z" fill="#aab2c4" stroke="#333a48" />
  </Icon>
);
const PanIcon = () => (
  <Icon size={18}>
    <path d="M6 16.500Q4 13 1.500 10.500 1.500 8.500 4.500 10.500L6 12 4 5Q4 3 5.800 4.500L7.500 9 7.300 2.500Q8.200.7 9.200 2.500L9.800 9 11.200 3Q12.500 2 13 3.500L12.300 9.500 14.500 6Q16 5.500 16 7L13.500 13.500 12.500 16.500z" fill="#fff" stroke="#333" strokeWidth="1" />
  </Icon>
);
const ZoomIcon = () => (
  <Icon size={18}>
    <circle cx="6.500" cy="8" r="4.700" fill="#e3f0f5" stroke="#555" strokeWidth="1.200" />
    <path d="M10 11.500l4 4.500" stroke="#333b4a" strokeWidth="2.800" />
    <path d="M14.500 1.500v5M12 4h5M12 8h5" stroke="#333" />
  </Icon>
);
const FitIcon = () => (
  <Icon size={18}>
    <path d="M1.500 1.500h15v15h-15z" stroke="#888" strokeDasharray="3 2" />
    <circle cx="7.500" cy="8" r="5.900" fill="#dceee9" stroke="#555" strokeWidth="1.200" />
    <path d="M12 12.500l4.500 4.500" stroke="#333b4a" strokeWidth="2.800" />
  </Icon>
);
const DisplayIcon = () => (
  <Icon size={18}>
    <path d="M1.500 1.500h15v11h-15z" fill="#e9edf3" stroke="#444c5c" strokeWidth="1.200" />
    <path d="M4 4h10v6.500H4z" fill="#8fb7e4" stroke="#4a70a5" />
    <path d="M7 12.500h4v2h2v2H5v-2h2z" fill="#fff" stroke="#444" />
  </Icon>
);
const GridIcon = () => (
  <Icon size={18}>
    <path d="M1.500 1.500h15v15h-15z" fill="#fff" stroke="#444" />
    <path d="M4.500 1.500v15M7.500 1.500v15M10.500 1.500v15M13.500 1.500v15M1.500 4.500h15M1.500 7.500h15M1.500 10.500h15M1.500 13.500h15" stroke="#777" />
  </Icon>
);
const ViewportsIcon = () => (
  <Icon size={18}>
    <path d="M1.500 2.500h7v6h-7zM9.500 2.500h7v6h-7zM1.500 9.500h7v6h-7zM9.500 9.500h7v6h-7z" fill="#a9c8ec" stroke="#2f4a75" />
    <path d="M3.500 4.500h3v2h-3zM11.500 4.500h3v2h-3zM3.500 11.500h3v2h-3zM11.500 11.500h3v2h-3z" stroke="#6d93c4" strokeWidth=".8" />
  </Icon>
);

const NAV = [
  ["Orbit", OrbitIcon, "gap-[3px]"],
  ["Look At", LookIcon, null],
  ["Pan", PanIcon, null],
  ["Zoom", ZoomIcon, null],
  ["Fit", FitIcon, "gap-[3px]"],
  ["Display Settings", DisplayIcon, "gap-px"],
  ["Grid and Snaps", GridIcon, "gap-px"],
  ["Viewports", ViewportsIcon, "gap-px"],
];

function NavBar() {
  return (
    <div className="absolute bottom-1.5 left-1/2 ml-[-77px] flex h-6 w-[237px] items-center gap-[5px] bg-[#f1f1f1] pl-0.5">
      {NAV.map(([label, G, drop]) => (
        <button key={label} aria-label={label} className={`flex items-center ${drop || "pr-[3px]"}`}>
          <G />
          {drop && <Caret />}
        </button>
      ))}
    </div>
  );
}

function ViewCube() {
  return (
    <div className="pointer-events-none absolute right-0 top-6 h-20 w-[11px] overflow-hidden font-['Liberation_Sans',sans-serif] text-[12px] leading-3">
      <span className="absolute left-2 top-0.5 font-bold text-[#7dee7d]">Y</span>
      <div className="absolute left-[7px] top-4 h-[53px] w-14 border-2 border-[#999] bg-[#eee] shadow-[0_0_6px_#bbb]" />
      <span className="absolute left-px top-[66px] font-bold text-[#7b7bff]">Z</span>
    </div>
  );
}

/* ---------- timeline ---------- */

const TlSketch = () => (
  <Icon size={16}>
    <path d="M1.500 1.500h12v13h-12z" fill="#f8f8f8" stroke="#9a9a9a" />
    <path d="M5 5h5M4.500 6v5M10.500 6q0 5-5 5.500" stroke="#7a93a8" strokeWidth=".9" />
    <path d="M0 0h2v2H0zM13 0h2v2h-2zM0 14h2v2H0zM4 4h1.500v1.500H4zM10 4h1.500v1.500H10zM4 11h1.500v1.500H4z" fill="#1487dc" />
    <Pencil />
  </Icon>
);
const TlExtrude = () => (
  <Icon size={16} box="0 0 32 32">
    <ExtrudeShape />
  </Icon>
);
const TlFillet = () => (
  <Icon size={16} box="0 0 32 32">
    <FilletShape />
    <path d="M1 5.500l5-4.500H17C26 1 31 7 31 15v11l-6.500 5H1z" stroke="#777" strokeWidth="1.500" />
    <path d="M11 5.500l5.500-5C26 .5 31.500 7 31.500 15l-7 5Q24 7 11 5.500z" fill={BLUE} />
  </Icon>
);
const TlMove = () => (
  <Icon size={16} box="0 0 32 32">
    <MoveShape />
    <path d="M16 6v20M6 16h20" stroke="#333" strokeWidth="3.500" />
  </Icon>
);
const TlCopy = () => (
  <Icon size={16}>
    <path d="M1.500 1.500q2.500-1.500 5 0v6q-2.500 1.500-5 0zM9.500 8.500q2.500-1.500 5 0v6q-2.500 1.500-5 0z" fill="#fff" stroke="#555" />
    <path d="M3.500 10v2.500h3" stroke="#3b95da" />
    <path d="M6 10.500l2.500 2-2.500 2z" fill="#3b95da" />
  </Icon>
);

const TL = { s: ["Sketch", TlSketch], e: ["Extrude", TlExtrude], f: ["Fillet", TlFillet], m: ["Move", TlMove], c: ["Copy", TlCopy] };
const STEPS = "seeffsesemsecmmmsecmsesecmsemcm".split("");
const DONE = 5;

const PLAYBACK = [
  ["Go to start", "M2 2h1.500v12H2zM13 2.500v11L4 8z"],
  ["Step back", "M11 2.500v11L1 8zM12 5.500h2v5h-2z"],
  ["Play", "M2 1l12 7L2 15z"],
  ["Step forward", "M4 2.500v11L14 8zM1 5.500h2v5H1z"],
  ["Go to end", "M11.500 2H13v12h-1.500zM2 2.500v11L11 8z"],
];

function Timeline() {
  return (
    <footer className="flex h-12 shrink-0 overflow-hidden border-t border-[#d6d6d6] bg-[#f1f1f1]">
      <div className="flex gap-[9px] pl-1.5 pt-[15px]">
        {PLAYBACK.map(([label, d]) => (
          <button key={label} aria-label={label} className="h-4">
            <Icon size={16}>
              <path d={d} fill="#555" />
            </Icon>
          </button>
        ))}
      </div>
      <ol className="ml-[17px] flex pt-[15px]">
        {STEPS.map((k, i) => {
          const [label, G] = TL[k];
          const last = i === STEPS.length - 1;
          return (
            <li key={i} className="relative flex h-[27px] w-6 flex-col items-center">
              <button aria-label={label} className={i >= DONE ? "opacity-25" : ""}>
                <G />
              </button>
              <span className="mt-[3px] h-[5px] w-0.5 bg-[#c6c6c6]" />
              <span className={`h-0.5 bg-[#c6c6c6] ${i === 0 ? "w-[13px] self-end" : last ? "w-[13px] self-start" : "w-6"}`} />
              {i === DONE - 1 && (
                <svg width="12" height="32" viewBox="0 0 12 32" className="absolute -right-1.5 -top-1.5 z-10" aria-hidden="true">
                  <path d="M0 0h12v4L7 9v23H5V9L0 4z" fill="#555" />
                </svg>
              )}
            </li>
          );
        })}
      </ol>
    </footer>
  );
}

export default function App() {
  return (
    <div className="flex h-screen min-h-[600px] flex-col overflow-hidden bg-white font-[Roboto,sans-serif] text-[11px]">
      <div className="flex h-[23px] shrink-0 items-start justify-end pr-[25px]">
        <button aria-label="Minimize window" className="flex h-[21px] w-2.5 items-center">
          <span className="h-px w-2.5 bg-black" />
        </button>
      </div>
      <TopBar />
      <Ribbon />
      <main className="relative flex flex-1 flex-col items-start justify-between overflow-hidden pb-1 pt-[7px]">
        <Scene />
        <Browser />
        <div className="relative ml-px flex h-[25px] w-[300px] items-center border border-t-0 border-[#c6c6c6] bg-[#f1f1f1] pl-6 pt-px text-[11px] leading-4 text-[#666]">
          <h2 className="flex-1">COMMENTS</h2>
          <button aria-label="Add comment" className="mr-2.5">
            <Icon size={10}>
              <circle cx="5" cy="5" r="4.500" fill="#222" />
              <path d="M2.500 5h5M5 2.500v5" stroke="#fff" strokeWidth="1.300" />
            </Icon>
          </button>
        </div>
        <NavBar />
        <ViewCube />
      </main>
      <Timeline />
    </div>
  );
}
